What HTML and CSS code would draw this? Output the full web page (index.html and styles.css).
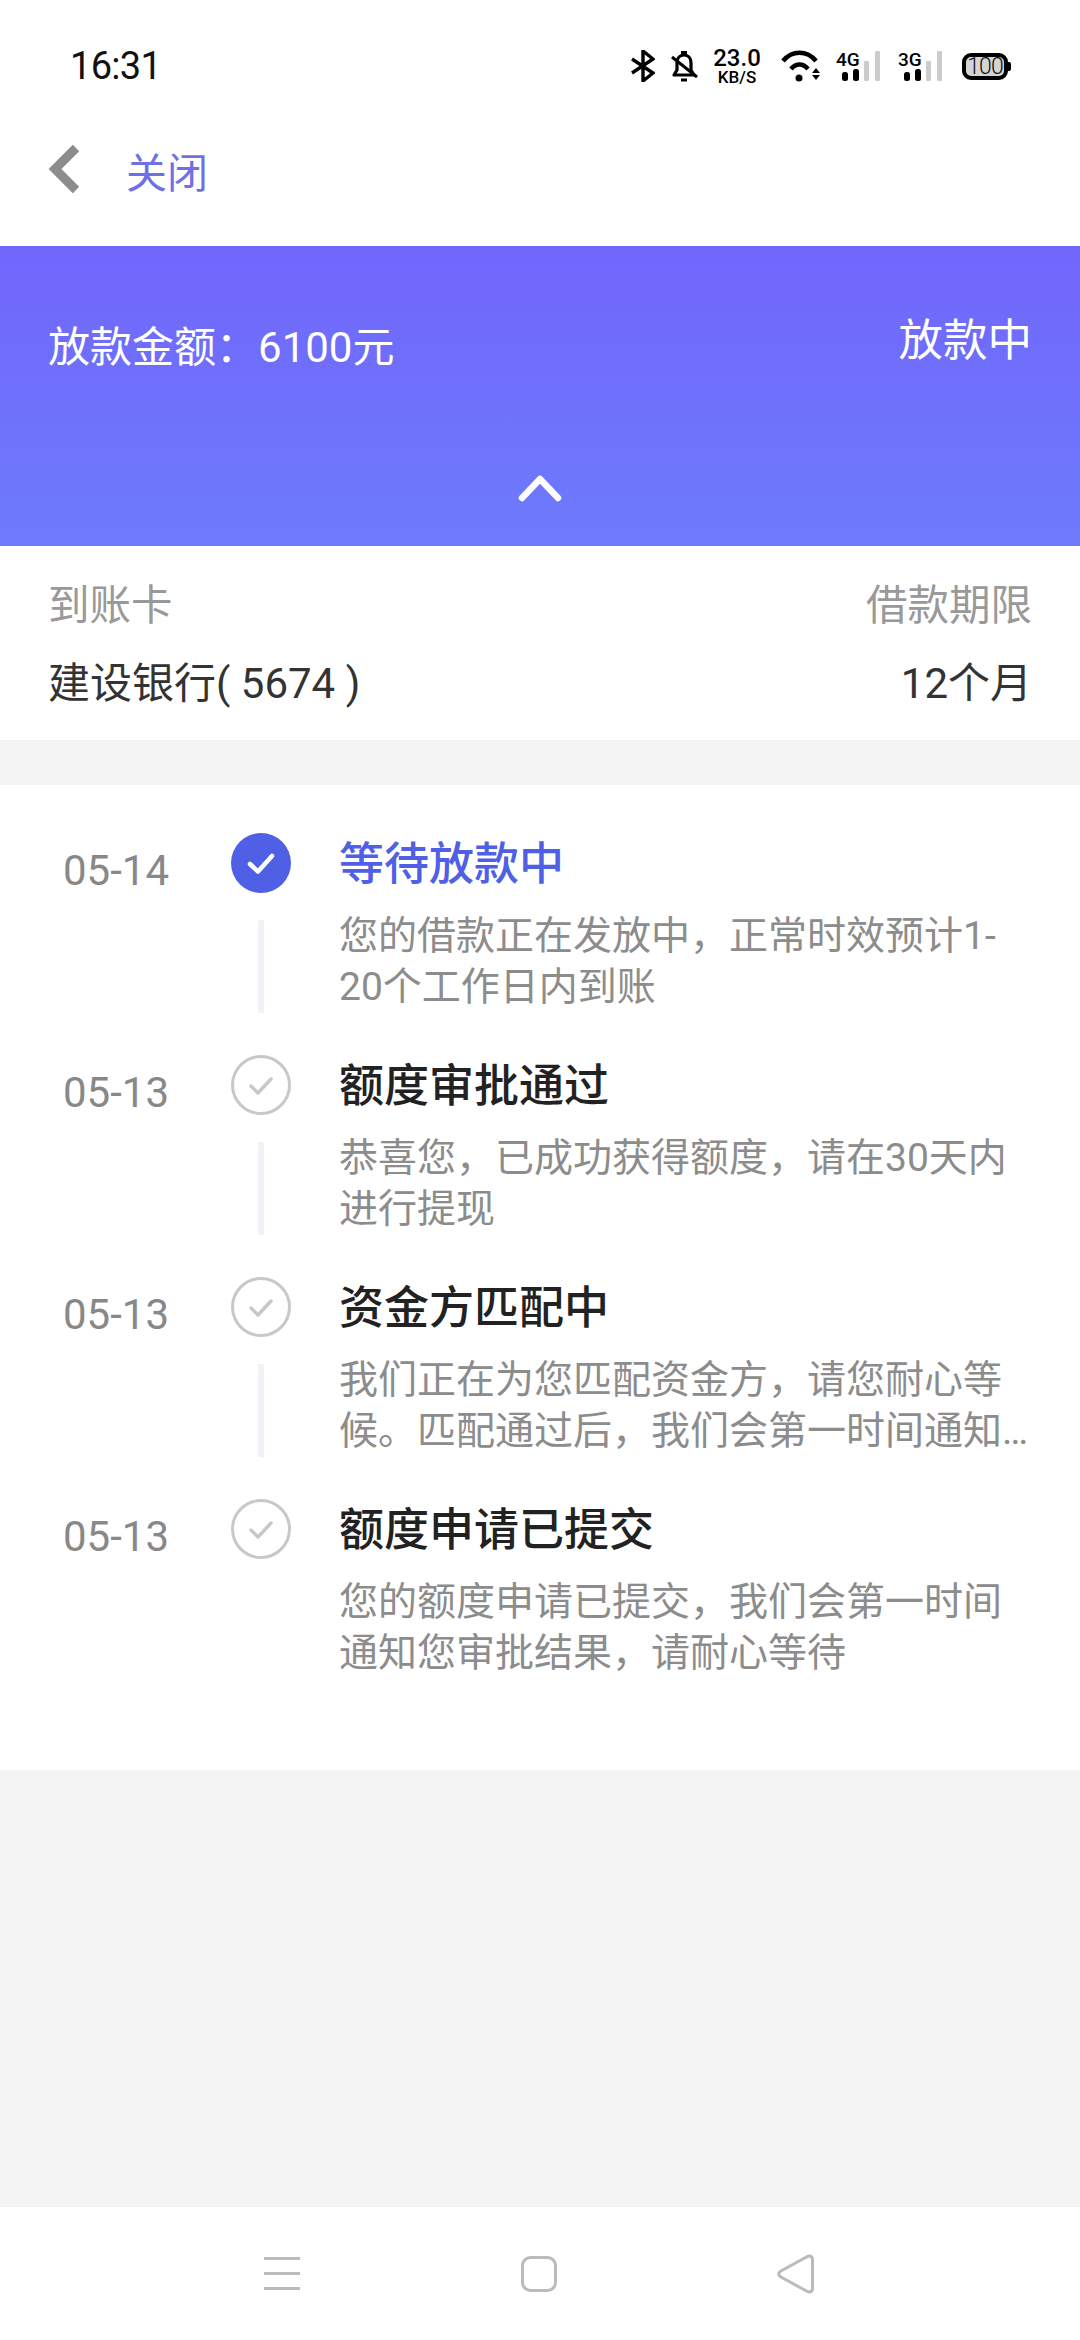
FILE: index.html
```html
<!DOCTYPE html>
<html lang="zh-CN">
<head>
<meta charset="utf-8">
<title>放款详情</title>
<link rel="stylesheet" href="styles.css">
</head>
<body>
<div class="page">
  <div class="status">
    <span class="time">16:31</span>
    <div class="status-icons">
      <svg class="ic-bt" width="24" height="32" viewBox="0 0 24 32"><path d="M1 9 L22 23 L12 31 V1 L22 9 L1 23" fill="none" stroke="#000" stroke-width="3.400"/></svg>
      <svg class="ic-bell" width="28" height="34" viewBox="0 0 28 34"><path d="M4 26 L7 21 V14 C7 9 10 6 14 6 C18 6 21 9 21 14 V21 L24 26 Z" fill="none" stroke="#000" stroke-width="3.200" stroke-linejoin="round"/><path d="M11 3.500 H17 M11 31 H17 M2 8 L27 28" stroke="#000" stroke-width="3" fill="none"/></svg>
      <div class="speed"><span class="speed-num">23.0</span><span class="speed-unit">KB/S</span></div>
      <svg class="ic-wifi" width="42" height="34" viewBox="0 0 42 34"><g fill="none" stroke="#000" stroke-width="4.500"><path d="M2 12 C11 1 26 1 35 12"/><path d="M10 20 C15 14 22 14 27 20"/></g><circle cx="18" cy="29" r="3.500"/><path d="M31 24 L35 19 L39 24 Z M31 26 L35 31 L39 26 Z"/></svg>
      <svg class="ic-sig" width="44" height="44" viewBox="0 0 44 44"><text x="0" y="22" class="sig-text">4G</text><rect x="6" y="28" width="6" height="9" rx="2.500" fill="#000"/><rect x="17" y="25" width="6" height="12" rx="2.500" fill="#000"/><rect x="28" y="17" width="5" height="20" rx="1" fill="#ccc"/><rect x="39" y="7" width="5" height="30" rx="1" fill="#ccc"/></svg>
      <svg class="ic-sig" width="44" height="44" viewBox="0 0 44 44"><text x="0" y="22" class="sig-text">3G</text><rect x="6" y="28" width="6" height="9" rx="2.500" fill="#000"/><rect x="17" y="25" width="6" height="12" rx="2.500" fill="#000"/><rect x="28" y="17" width="5" height="20" rx="1" fill="#ccc"/><rect x="39" y="7" width="5" height="30" rx="1" fill="#ccc"/></svg>
      <div class="battery"><span class="battery-level">100</span></div>
      <span class="battery-nub"></span>
    </div>
  </div>

  <div class="nav">
    <svg width="34" height="52" viewBox="0 0 34 52"><path d="M28 5 L7 26 L28 47" fill="none" stroke="#8c8c8c" stroke-width="9"/></svg>
    <span class="nav-close">关闭</span>
  </div>

  <div class="banner">
    <div class="banner-row">
      <span class="amount">放款金额<span class="colon">：</span>6100元</span>
      <span class="state">放款中</span>
    </div>
    <svg class="chev" width="46" height="30" viewBox="0 0 46 30"><path d="M5 25 L23 6 L41 25" fill="none" stroke="#fff" stroke-width="6.500" stroke-linecap="round" stroke-linejoin="round"/></svg>
  </div>

  <div class="info">
    <div class="info-row muted"><span>到账卡</span><span>借款期限</span></div>
    <div class="info-row dark"><span>建设银行( 5674 )</span><span>12个月</span></div>
  </div>

  <div class="timeline">
    <div class="item active">
      <span class="date">05-14</span>
      <div class="rail">
        <svg class="dot" width="60" height="60" viewBox="0 0 60 60"><circle cx="30" cy="30" r="30" fill="#4f60e6"/><path d="M19 31 L27 38.500 L41 23" fill="none" stroke="#fff" stroke-width="4.500" stroke-linecap="round" stroke-linejoin="round"/></svg>
        <span class="line"></span>
      </div>
      <div class="body">
        <div class="title">等待放款中</div>
        <div class="desc">您的借款正在发放中，正常时效预计1-<wbr>20个工作日内到账</div>
      </div>
    </div>
    <div class="item">
      <span class="date">05-13</span>
      <div class="rail">
        <svg class="dot" width="60" height="60" viewBox="0 0 60 60"><circle cx="30" cy="30" r="28.500" fill="none" stroke="#c8c8c8" stroke-width="3"/><path d="M20 31 L27 38 L40 24" fill="none" stroke="#c8c8c8" stroke-width="3.500" stroke-linecap="round" stroke-linejoin="round"/></svg>
        <span class="line"></span>
      </div>
      <div class="body">
        <div class="title">额度审批通过</div>
        <div class="desc">恭喜您，已成功获得额度，请在30天内进行提现</div>
      </div>
    </div>
    <div class="item">
      <span class="date">05-13</span>
      <div class="rail">
        <svg class="dot" width="60" height="60" viewBox="0 0 60 60"><circle cx="30" cy="30" r="28.500" fill="none" stroke="#c8c8c8" stroke-width="3"/><path d="M20 31 L27 38 L40 24" fill="none" stroke="#c8c8c8" stroke-width="3.500" stroke-linecap="round" stroke-linejoin="round"/></svg>
        <span class="line"></span>
      </div>
      <div class="body">
        <div class="title">资金方匹配中</div>
        <div class="desc">我们正在为您匹配资金方，请您耐心等候。匹配通过后，我们会第一时间通知您审批结果，请耐心等待</div>
      </div>
    </div>
    <div class="item">
      <span class="date">05-13</span>
      <div class="rail">
        <svg class="dot" width="60" height="60" viewBox="0 0 60 60"><circle cx="30" cy="30" r="28.500" fill="none" stroke="#c8c8c8" stroke-width="3"/><path d="M20 31 L27 38 L40 24" fill="none" stroke="#c8c8c8" stroke-width="3.500" stroke-linecap="round" stroke-linejoin="round"/></svg>
      </div>
      <div class="body">
        <div class="title">额度申请已提交</div>
        <div class="desc">您的额度申请已提交，我们会第一时间通知您审批结果，请耐心等待</div>
      </div>
    </div>
  </div>

  <div class="spacer"></div>

  <div class="sysnav">
    <svg width="36" height="33" viewBox="0 0 36 33"><path d="M0 1.500 H36 M0 16.500 H36 M0 31.500 H36" stroke="#bbb" stroke-width="3"/></svg>
    <svg width="36" height="36" viewBox="0 0 36 36"><rect x="1.500" y="1.500" width="33" height="33" rx="8" fill="none" stroke="#bbb" stroke-width="3"/></svg>
    <svg width="37" height="40" viewBox="0 0 37 40"><path d="M32 2 Q35.500 2 35.500 5.500 V34.500 Q35.500 38 32 38 Q31 38 29 36.800 L3.500 22.800 Q0 20 3.500 17.200 L29 3.200 Q31 2 32 2 Z" fill="none" stroke="#bbb" stroke-width="3"/></svg>
  </div>
</div>
</body>
</html>
```
FILE: styles.css
```css
* { box-sizing: border-box; }
html, body { margin: 0; padding: 0; }
body { font-family: Roboto, "Noto Sans CJK SC", sans-serif; background: #f4f4f5; }
.page { width: 1080px; height: 2340px; display: flex; flex-direction: column; }

.status { height: 100px; background: #fff; display: flex; align-items: center; justify-content: space-between; padding: 32px 69px 0 70px; flex: none; }
.time { font-size: 38px; font-weight: 400; color: #111; letter-spacing: -0.700px; line-height: 1; }
.status-icons { display: flex; align-items: center; }
.ic-bt { margin-right: 15px; }
.ic-bell { margin-right: 14px; }
.speed { display: flex; flex-direction: column; align-items: center; width: 50px; margin-right: 19px; color: #000; font-weight: 500; }
.speed-num { font-size: 24px; line-height: 21px; }
.speed-unit { font-size: 17px; line-height: 16px; }
.ic-wifi { margin-right: 13px; }
.ic-sig { margin-right: 18px; }
.ic-sig + .battery { margin-left: 2px; }
.sig-text { font-family: Roboto, sans-serif; font-size: 19px; font-weight: 500; fill: #000; }
.battery { width: 46px; height: 27px; border: 4px solid #000; border-radius: 9px; display: flex; align-items: center; justify-content: center; background: #d4d4d4; }
.battery-level { font-size: 23px; color: #111; line-height: 1; font-weight: 300; letter-spacing: -1px; }
.battery-nub { width: 3px; height: 9px; background: #000; border-radius: 0 2px 2px 0; }

.nav { height: 146px; background: #fff; display: flex; align-items: center; padding: 0 0 8px 48px; flex: none; }
.nav-close { font-size: 41px; color: #6f6fe6; margin-left: 44px; line-height: 1; padding-top: 10px; }

.banner { height: 300px; background: linear-gradient(180deg, #7166fc 0%, #6d7bfb 100%); flex: none; display: flex; flex-direction: column; color: #fff; position: relative; padding: 65px 48px 0; }
.banner-row { display: flex; justify-content: space-between; align-items: flex-start; }
.amount { font-size: 42px; line-height: 70px; margin-top: 2px; }
.colon { font-family: "Noto Sans CJK TC", sans-serif; line-height: 0; }
.state { font-size: 44.500px; line-height: 60px; margin-right: 0; }
.chev { align-self: center; margin-top: 90px; margin-left: 0; }

.info { height: 194px; background: #fff; padding: 35px 48px 0 48px; flex: none; display: flex; flex-direction: column; gap: 28px; }
.info-row { display: flex; justify-content: space-between; line-height: 50px; }
.muted { color: #999; font-size: 41.500px; }
.dark { color: #333; font-size: 42px; }

.timeline { margin-top: 45px; background: #fff; padding: 48px 48px 91px 63px; display: flex; flex-direction: column; gap: 42px; flex: none; }
.item { display: grid; grid-template-columns: 168px 60px 1fr; column-gap: 0; }
.date { font-size: 42px; line-height: 60px; padding-top: 8px; color: #888; }
.rail { display: flex; flex-direction: column; align-items: center; }
.dot { display: block; flex: none; }
.line { width: 6px; height: 93px; margin-top: 27px; background: #f1f2f6; }
.body { padding-left: 48px; padding-top: 2px; }
.title { font-size: 45px; line-height: 60px; font-weight: 500; color: #222; }
.active .title { color: #4f60e6; }
.desc { margin-top: 16px; font-size: 39px; line-height: 51px; color: #8c8c8c; display: -webkit-box; -webkit-box-orient: vertical; -webkit-line-clamp: 2; overflow: hidden; }

.spacer { flex: 1; }
.sysnav { height: 133px; background: #fff; flex: none; display: flex; align-items: center; justify-content: center; gap: 220.500px; padding-right: 2px; }
```
